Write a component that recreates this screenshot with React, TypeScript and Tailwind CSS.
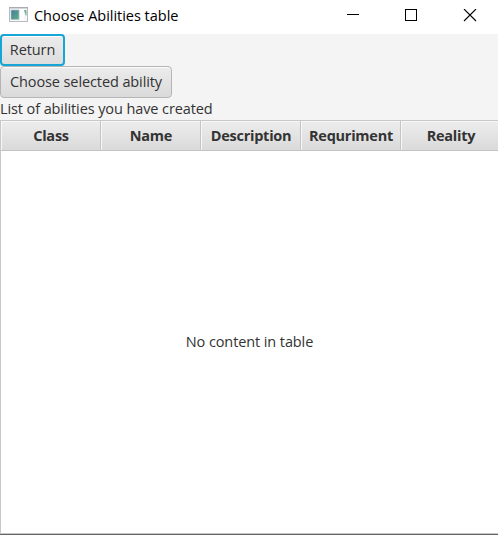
const columns = ['Class', 'Name', 'Description', 'Requriment', 'Reality'];

function AppIcon() {
  return (
    <svg width="20" height="17" viewBox="0 0 20 17" className="shrink-0">
      <defs>
        <linearGradient id="pane" x1="0" y1="0" x2="1" y2="1">
          <stop offset="0" stopColor="#477a9f" />
          <stop offset="1" stopColor="#5fb083" />
        </linearGradient>
      </defs>
      <rect x="0.5" y="0.5" width="18" height="14" fill="#f7f7f8" stroke="#b9bcc2" />
      <path d="M0 0.8h19" stroke="#a5a8b0" strokeWidth="1.2" />
      <rect x="2" y="3" width="8" height="9.5" fill="url(#pane)" stroke="#a9c4cc" strokeWidth="0.7" />
      <rect x="11" y="2" width="4" height="11" fill="#ffffff" />
      <path d="M15 3h2.5v6l-1-1-1-3z" fill="#78b49c" />
    </svg>
  );
}

export default function App() {
  return (
    <div className="flex h-[535px] w-[498px] flex-col overflow-hidden whitespace-nowrap bg-[#f4f4f4] font-['Open_Sans','Noto_Sans',sans-serif] text-[14.5px] leading-5 tracking-[-0.1px] text-[#333]">
      <header className="flex h-[34px] shrink-0 items-start bg-white pl-[9px] text-black">
        <div className="pt-[7px]"><AppIcon /></div>
        <h1 className="ml-[5px] pt-[6px] tracking-[-0.02px]">Choose Abilities table</h1>
        <svg width="130" height="13" viewBox="0 0 130 13" className="ml-auto mr-[21px] mt-[9px]" fill="none" stroke="black">
          <path d="M0 5.5h12M58.5 0.5h11v11h-11z" shapeRendering="crispEdges" />
          <path d="M117 0l12 12M129 0l-12 12" strokeWidth="1.1" />
        </svg>
      </header>
      <main className="flex min-h-0 flex-1 flex-col items-start">
        <button className="h-8 w-[65px] shrink-0 rounded-[4px] border-2 border-[#16a5d5] bg-linear-to-b from-[#ececec] to-[#dddddd] shadow-[inset_0_1px_0_#fff]">
          <span className="block">Return</span>
        </button>
        <button className="h-8 w-[172px] shrink-0 rounded-[4px] border border-[#b5b5b5] bg-linear-to-b from-[#ececec] to-[#dadada] shadow-[inset_0_1px_0_#fafafa]">
          <span className="block">Choose selected ability</span>
        </button>
        <p className="h-[22px] shrink-0 pt-px">List of abilities you have created</p>
        <section className="flex min-h-0 w-full flex-1 flex-col border-b border-l border-t border-[#c8c8c8] bg-white">
          <div className="flex h-[30px] shrink-0 border-b border-[#c4c4c4]">
            {columns.map((name) => (
              <div key={name} className="flex w-[100px] shrink-0 items-center justify-center border-r border-[#c4c4c4] bg-linear-to-b from-[#ededed] to-[#dadada] pl-px font-bold tracking-[-0.25px] shadow-[inset_1px_1px_0_#f7f7f7]">
                {name}
              </div>
            ))}
          </div>
          <div className="flex flex-1 items-center justify-center">No content in table</div>
        </section>
      </main>
      <div className="h-px shrink-0 bg-[#666365]" />
    </div>
  );
}
